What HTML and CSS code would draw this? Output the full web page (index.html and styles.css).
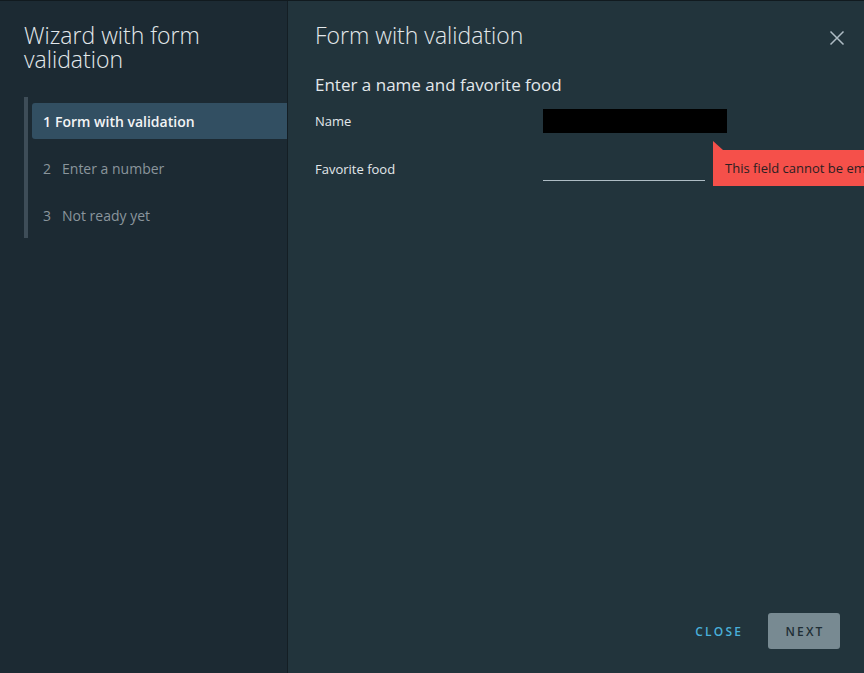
FILE: index.html
```html
<!DOCTYPE html>
<html>
<head>
<meta charset="utf-8">
<link rel="stylesheet" href="styles.css">
</head>
<body>
<div class="wizard">
  <aside class="nav">
    <h1 class="nav-title">Wizard with form validation</h1>
    <ol class="steps">
      <li class="step active"><span class="num">1</span>Form with validation</li>
      <li class="step"><span class="num">2</span>Enter a number</li>
      <li class="step"><span class="num">3</span>Not ready yet</li>
    </ol>
  </aside>
  <main class="content">
    <header class="head">
      <h2 class="page-title">Form with validation</h2>
      <button class="close-x" aria-label="Close">
        <svg width="16" height="16" viewBox="0 0 16 16"><path d="M1.5 1.5 L14.5 14.5 M14.5 1.5 L1.5 14.5" stroke="#aebcc4" stroke-width="1.5" fill="none"/></svg>
      </button>
    </header>
    <h3 class="section">Enter a name and favorite food</h3>
    <form class="form">
      <div class="row">
        <label class="label">Name</label>
        <div class="field"><div class="redacted"></div></div>
      </div>
      <div class="row">
        <label class="label">Favorite food</label>
        <div class="field">
          <div class="underline"></div>
          <div class="tooltip">This field cannot be empty</div>
        </div>
      </div>
    </form>
    <footer class="foot">
      <button class="btn-link">CLOSE</button>
      <button class="btn-next" disabled>NEXT</button>
    </footer>
  </main>
</div>
</body>
</html>
```
FILE: styles.css
```css
* { box-sizing: border-box; }
html, body { margin: 0; padding: 0; }
body {
  font-family: "Open Sans", Lato, sans-serif;
  background: #21333b;
  overflow: hidden;
}
.wizard {
  display: flex;
  width: 864px;
  height: 673px;
  border-top: 1px solid #111a1f;
}
.nav {
  width: 288px;
  flex: none;
  background: #1c2a33;
  border-right: 1px solid #141e24;
  padding: 22px 0 0 24px;
}
.nav-title {
  margin: 0;
  font-size: 23px;
  line-height: 24px;
  font-weight: 300;
  color: #e3e8eb;
  width: 200px;
}
.steps {
  list-style: none;
  margin: 26px 0 0 0;
  padding: 6px 0 5px 4px;
  border-left: 4px solid #3e4d58;
}
.step {
  height: 36px;
  display: flex;
  align-items: center;
  padding-left: 11px;
  font-size: 14px;
  color: #8a959c;
  margin-bottom: 11px;
  border-radius: 3px 0 0 3px;
}
.step:last-child { margin-bottom: 0; }
.step .num { margin-right: 11px; }
.step.active {
  background: #324f62;
  color: #f2f4f5;
  font-weight: 600;
}
.step.active .num { margin-right: 4px; }
.content {
  flex: 1;
  display: flex;
  flex-direction: column;
  background: #22343c;
  padding: 22px 24px 24px 27px;
}
.head {
  display: flex;
  justify-content: space-between;
  align-items: flex-start;
}
.page-title {
  margin: 0;
  font-size: 23px;
  line-height: 24px;
  font-weight: 300;
  color: #e3e8eb;
}
.close-x {
  background: none;
  border: 0;
  padding: 0;
  margin: 7px -5px 0 0;
  width: 16px;
  height: 16px;
}
.section {
  margin: 26px 0 0 0;
  font-size: 17px;
  line-height: 24px;
  font-weight: 400;
  color: #e3e8eb;
}
.form { margin-top: 12px; }
.row {
  display: flex;
  align-items: center;
  height: 24px;
  margin-bottom: 24px;
}
.label {
  width: 228px;
  font-size: 13px;
  color: #e3e8eb;
}
.field {
  position: relative;
  height: 24px;
}
.redacted {
  width: 184px;
  height: 24px;
  background: #000;
}
.underline {
  width: 162px;
  height: 24px;
  border-bottom: 1px solid #aebcc4;
}
.tooltip {
  position: absolute;
  left: 170px;
  top: -7px;
  width: 200px;
  height: 36px;
  background: #f5504a;
  color: #2a1f22;
  font-size: 13px;
  line-height: 36px;
  padding-left: 12px;
  white-space: nowrap;
}
.tooltip::before {
  content: "";
  position: absolute;
  left: 0;
  top: -9px;
  border-left: 10px solid #f5504a;
  border-top: 9px solid transparent;
}
.foot {
  margin-top: auto;
  display: flex;
  justify-content: flex-end;
  align-items: center;
}
.btn-link {
  background: none;
  border: 0;
  font-family: inherit;
  font-size: 12px;
  letter-spacing: 0.18em;
  color: #49afd9;
  padding: 0 12px;
  height: 36px;
  margin-right: 13px;
  font-weight: 600;
}
.btn-next {
  font-family: inherit;
  width: 72px;
  height: 36px;
  border: 0;
  border-radius: 3px;
  background: #788a92;
  color: #1f2e35;
  font-size: 12px;
  letter-spacing: 0.18em;
  font-weight: 600;
  padding: 0 0 0 2px;
}
```
